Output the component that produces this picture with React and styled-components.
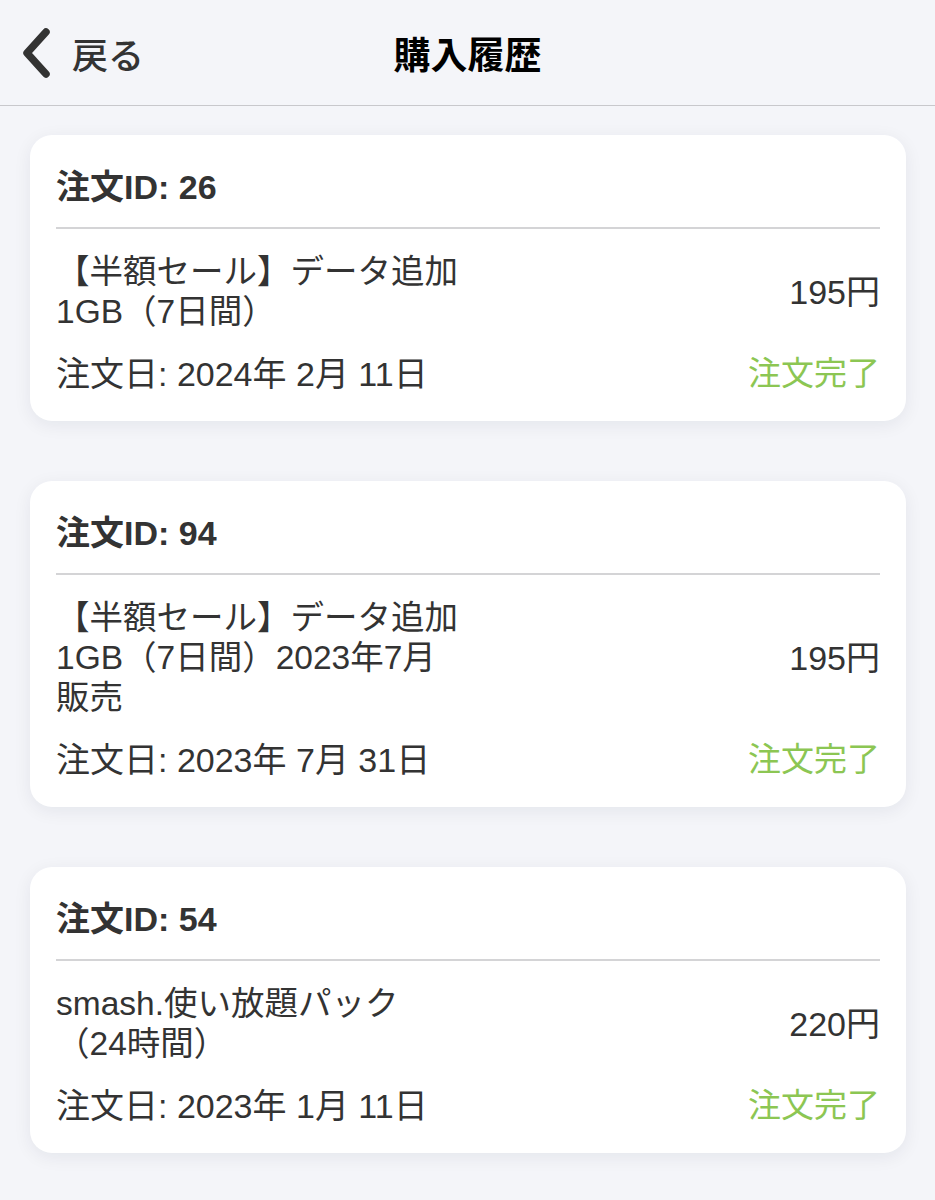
import React from "react";
import styled, { createGlobalStyle } from "styled-components";

const GlobalStyle = createGlobalStyle`
  body {
    margin: 0;
    background: #f4f5f9;
    font-family: "Liberation Sans", "Noto Sans CJK JP", sans-serif;
    color: #333;
  }
`;

const Page = styled.div`
  min-height: 1200px;
  background: #f4f5f9;
`;

const Header = styled.header`
  position: relative;
  height: 105px;
  display: flex;
  align-items: center;
  justify-content: center;
  border-bottom: 1px solid #c8c8cc;
  background: #f4f5f9;
`;

const BackButton = styled.button`
  position: absolute;
  left: 20px;
  top: 27px;
  display: flex;
  align-items: center;
  gap: 20px;
  border: 0;
  padding: 0;
  background: none;
  color: #333;
  font-family: "Noto Sans CJK JP", sans-serif;
  font-size: 36px;
  line-height: 52px;
  font-weight: 500;
  cursor: pointer;
`;

const Title = styled.h1`
  margin: 0;
  font-family: "Noto Sans CJK JP", sans-serif;
  font-size: 37px;
  font-weight: 700;
  color: #000;
`;

const List = styled.main`
  display: flex;
  flex-direction: column;
  gap: 60px;
  padding: 29px 29px 40px 30px;
`;

const Card = styled.section`
  background: #fff;
  border-radius: 22px;
  box-shadow: 0 4px 18px rgba(20, 30, 60, 0.07);
  padding: 32px 26px 27px;
`;

const OrderId = styled.div`
  font-size: 34px;
  line-height: 40px;
  font-weight: 700;
  color: #333;
`;

const Divider = styled.hr`
  margin: 20px 0 23px;
  border: 0;
  height: 2px;
  background: #d4d4d6;
`;

const Row = styled.div`
  display: flex;
  align-items: center;
  justify-content: space-between;
  margin-top: ${(p) => p.$gap || 0}px;
`;

const Name = styled.div`
  font-size: 33.5px;
  line-height: 40px;
  color: #333;
  white-space: pre-line;
`;

const Price = styled.div`
  font-size: 34px;
  line-height: 40px;
  color: #333;
`;

const DateText = styled.div`
  font-size: 34px;
  line-height: 40px;
  color: #333;
`;

const Status = styled.div`
  font-size: 33px;
  line-height: 40px;
  color: #8cc653;
`;

const Chevron = () => (
  <svg width="32" height="52" viewBox="0 0 32 52">
    <path
      d="M26 5 L7 26 L26 47"
      fill="none"
      stroke="#333"
      strokeWidth="7.5"
      strokeLinecap="round"
      strokeLinejoin="round"
    />
  </svg>
);

const orders = [
  {
    id: "26",
    name: "【半額セール】データ追加\n1GB（7日間）",
    price: "195円",
    date: "注文日: 2024年 2月 11日",
  },
  {
    id: "94",
    name: "【半額セール】データ追加\n1GB（7日間）2023年7月\n販売",
    price: "195円",
    date: "注文日: 2023年 7月 31日",
  },
  {
    id: "54",
    name: "smash.使い放題パック\n（24時間）",
    price: "220円",
    date: "注文日: 2023年 1月 11日",
  },
];

export default function App() {
  return (
    <Page>
      <GlobalStyle />
      <Header>
        <BackButton>
          <Chevron />
          戻る
        </BackButton>
        <Title>購入履歴</Title>
      </Header>
      <List>
        {orders.map((o) => (
          <Card key={o.id}>
            <OrderId>注文ID: {o.id}</OrderId>
            <Divider />
            <Row>
              <Name>{o.name}</Name>
              <Price>{o.price}</Price>
            </Row>
            <Row $gap={22}>
              <DateText>{o.date}</DateText>
              <Status>注文完了</Status>
            </Row>
          </Card>
        ))}
      </List>
    </Page>
  );
}
